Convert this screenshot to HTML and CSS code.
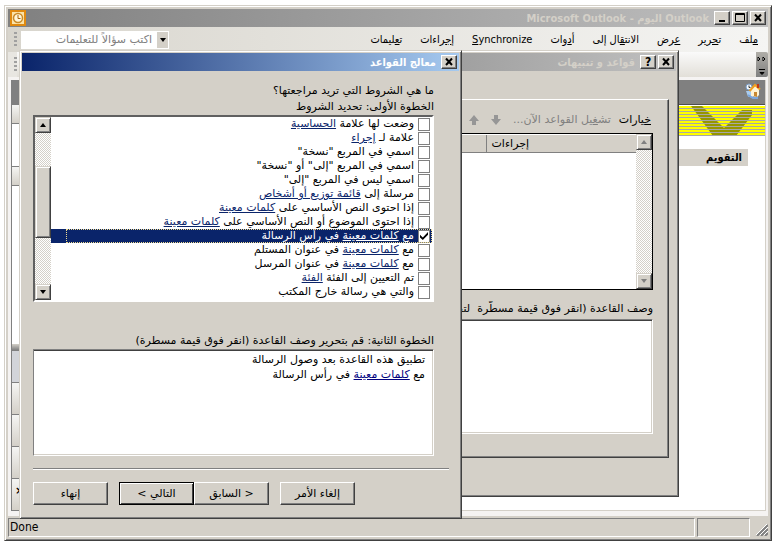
FILE: index.html
```
<!DOCTYPE html>
<html lang="ar">
<head>
<meta charset="utf-8">
<title>Microsoft Outlook</title>
<link rel="stylesheet" href="styles.css">
</head>
<body>
<main class="desktop">
  <section class="window app">
    <header class="titlebar inactive" dir="rtl">
      <button class="cap" aria-label="إغلاق"><svg viewBox="0 0 12 10"><path d="M3 1.5l6 6.500M9 1.500l-6 6.500" stroke="#000" stroke-width="2"/></svg></button>
      <button class="cap" aria-label="تكبير"><svg viewBox="0 0 12 10"><path d="M1.500 0.500h9v8h-9zM2 1.500h8" fill="none" stroke="#000"/></svg></button>
      <button class="cap" aria-label="تصغير"><svg viewBox="0 0 12 10"><path d="M3 8h6" stroke="#000" stroke-width="2"/></svg></button>
      <h1 class="caption"><bdi>Outlook</bdi> اليوم - <bdi>Microsoft Outlook</bdi></h1>
      <svg class="appicon" viewBox="0 0 16 16"><rect x="1" y="1" width="14" height="14" fill="#fbe3a8" stroke="#e08a10" stroke-width="2"/><circle cx="8" cy="8" r="4.500" fill="#fff6d8" stroke="#c98a28" stroke-width="1.500"/><path d="M8 5v3.500h2.500" fill="none" stroke="#a8660c"/></svg>
    </header>
    <nav class="menubar" dir="rtl">
      <a href="#"><u>م</u>لف</a>
      <a href="#">ت<u>ح</u>رير</a>
      <a href="#"><u>ع</u>رض</a>
      <a href="#">الانت<u>ق</u>ال إلى</a>
      <a href="#">أ<u>د</u>وات</a>
      <a href="#"><u>S</u>ynchronize</a>
      <a href="#">إ<u>ج</u>راءات</a>
      <a href="#">ت<u>ع</u>ليمات</a>
      <div class="ask"><button aria-label="فتح القائمة"><i class="tri down"></i></button><input type="text" value="اكتب سؤالاً للتعليمات" aria-label="سؤال"></div>
      <i class="grip"></i>
    </nav>
    <div class="toolbar"><i class="grip"></i><span class="band"></span><button class="more" aria-label="خيارات شريط الأدوات"><svg viewBox="0 0 12 25"><path d="M2 5l2 2-2 2zM7 5l2 2-2 2z" fill="#fff" stroke="#000"/><path d="M3 17.500h6M4 20.500h4l-2 2z" stroke="#000"/></svg></button></div>
    <div class="workspace">
      <aside class="navpane">
        <div class="head"></div><div class="item h19"></div><div class="gap h43"></div><div class="item h19"></div><div class="fill"></div><div class="split"></div><div class="sel"></div><div class="tab"></div><div class="tab"></div><div class="tab"></div><div class="tab last">×</div>
      </aside>
      <div class="today" dir="rtl">
        <div class="home"><svg viewBox="0 0 16 16"><path d="M1 8h7v7l-5-1.500z" fill="#a8ccf0"/><path d="M3 12l5 3h5" fill="none" stroke="#7aa6dc" stroke-width="2"/><circle cx="4" cy="4" r="3" fill="#f4faff" stroke="#7a9cc4"/><path d="M4 2.500v2h1.500" fill="none" stroke="#333"/><path d="M6 7.500v5.500l6 1 2-2V6l-4-4z" fill="#fff4d4"/><path d="M4.500 8L10 2l5 4.500" fill="none" stroke="#f0a020" stroke-width="2"/><path d="M13 1v4" stroke="#c03818" stroke-width="2"/><path d="M9 9h3v5l-3-1z" fill="#c88830"/></svg></div>
        <div class="banner"><svg viewBox="0 0 61 30"><path d="M0 0h11l22 22L51 4h10v5L45 30H22z" fill="#969600"/></svg></div>
        <h2 class="cal">التقويم</h2>
      </div>
    </div>
    <footer class="status"><span class="cell main">Done</span><span class="cell side"></span><svg class="resize" viewBox="0 0 12 12"><path d="M1 12L12 1M5 12l7-7M9 12l3-3" stroke="#808080" stroke-width="2"/><path d="M0 11L11 0M4 11l8-8M8 11l4-4" stroke="#fff"/></svg></footer>
  </section>

  <section class="window rules" dir="rtl">
    <header class="titlebar inactive">
      <button class="cap" aria-label="إغلاق"><svg viewBox="0 0 12 10"><path d="M3 1.500l6 6.500M9 1.500l-6 6.500" stroke="#000" stroke-width="2"/></svg></button>
      <button class="cap" aria-label="تعليمات"><b>?</b></button>
      <h2 class="caption">قواعد و تنبيهات</h2>
    </header>
    <div class="panel">
      <div class="tools">
        <button><u>خ</u>يارات</button>
        <button disabled>تش<u>غ</u>يل القواعد الآن...</button>
        <button disabled aria-label="نقل لأسفل"><svg viewBox="0 0 10 10"><path d="M3 0h4v4h3l-5 6-5-6h3z" fill="#969696"/></svg></button>
        <button disabled aria-label="نقل لأعلى"><svg viewBox="0 0 10 10"><path d="M3 10h4V6h3L5 0 0 6h3z" fill="#969696"/></svg></button>
      </div>
      <div class="grid">
        <div class="bar off"><button aria-label="لأعلى"><i class="tri up"></i></button><span></span><button aria-label="لأسفل"><i class="tri down"></i></button></div>
        <table><thead><tr><th>إجراءات</th><th class="rest"></th></tr></thead></table>
      </div>
      <p class="label">وصف القاعدة (انقر فوق قيمة مسطّرة&nbsp; لتحرير)</p>
      <div class="box"></div>
    </div>
  </section>

  <section class="window wizard" dir="rtl">
    <header class="titlebar">
      <button class="cap" aria-label="إغلاق"><svg viewBox="0 0 12 10"><path d="M3 1.500l6 6.500M9 1.500l-6 6.500" stroke="#000" stroke-width="2"/></svg></button>
      <h2 class="caption">معالج القواعد</h2>
    </header>
    <div class="body">
      <p class="line">ما هي الشروط التي تريد مراجعتها؟</p>
      <p class="line">الخطوة الأولى: تحديد الشروط</p>
      <div class="list">
        <div class="rows">
          <label><input type="checkbox"><span>وضعت لها علامة <a href="#">الحساسية</a></span></label>
          <label><input type="checkbox"><span>علامة لـ <a href="#">إجراء</a></span></label>
          <label><input type="checkbox"><span>اسمي في المربع "نسخة"</span></label>
          <label><input type="checkbox"><span>اسمي في المربع "إلى" أو "نسخة"</span></label>
          <label><input type="checkbox"><span>اسمي ليس في المربع "إلى"</span></label>
          <label><input type="checkbox"><span>مرسلة إلى <a href="#">قائمة توزيع أو أشخاص</a></span></label>
          <label><input type="checkbox"><span>إذا احتوى النص الأساسي على <a href="#">كلمات معينة</a></span></label>
          <label><input type="checkbox"><span>إذا احتوى الموضوع أو النص الأساسي على <a href="#">كلمات معينة</a></span></label>
          <label class="on"><input type="checkbox" checked><span>مع <a href="#">كلمات معينة</a> في رأس الرسالة</span></label>
          <label><input type="checkbox"><span>مع <a href="#">كلمات معينة</a> في عنوان المستلم</span></label>
          <label><input type="checkbox"><span>مع <a href="#">كلمات معينة</a> في عنوان المرسل</span></label>
          <label><input type="checkbox"><span>تم التعيين إلى الفئة <a href="#">الفئة</a></span></label>
          <label><input type="checkbox"><span>والتي هي رسالة خارج المكتب</span></label>
        </div>
        <div class="bar"><button aria-label="لأعلى"><i class="tri up"></i></button><span class="before"></span><span class="thumb"></span><span></span><button aria-label="لأسفل"><i class="tri down"></i></button></div>
      </div>
      <p class="line second">الخطوة الثانية: قم بتحرير وصف القاعدة (انقر فوق قيمة مسطرة)</p>
      <div class="box desc">
        <p>تطبيق هذه القاعدة بعد وصول الرسالة</p>
        <p>مع <a href="#">كلمات معينة</a> في رأس الرسالة</p>
      </div>
      <hr>
      <div class="buttons">
        <button>إلغاء الأمر</button>
        <button class="gapped">&lt; السابق</button>
        <button class="default">التالي &gt;</button>
        <button class="gapped">إنهاء</button>
      </div>
    </div>
  </section>
</main>
</body>
</html>
```
FILE: styles.css
```
:root {
  --face: #d4d0c8;
  --shade: #808080;
  --dark: #404040;
  --narrow: "DejaVu Sans Condensed", "DejaVu Sans", sans-serif;
}
* { box-sizing: border-box; }
body {
  margin: 0;
  background: #fff;
  color: #000;
  font: 11px/15px "DejaVu Sans", sans-serif;
}
h1, h2, p { margin: 0; font-size: inherit; font-weight: normal; }
button, input { font: inherit; color: inherit; margin: 0; padding: 0; border: 0; background: none; }
svg { display: block; }
a { color: #0a246a; }

.desktop { position: relative; height: 100vh; min-height: 546px; padding: 5px 4px; overflow: hidden; }

/* Window frames */
.window {
  display: flex;
  flex-direction: column;
  background: var(--face);
  border: 1px solid;
  border-color: var(--face) var(--dark) var(--dark) var(--face);
  box-shadow: inset 1px 1px #fff, inset -1px -1px var(--shade);
}
.app { height: 100%; padding: 3px; }
.rules { position: absolute; left: 240px; right: 97px; top: 50px; bottom: 49px; padding: 2px; }
.wizard { position: absolute; left: 19px; right: 314px; top: 50px; bottom: 27px; padding: 2px; }

.titlebar {
  display: flex;
  align-items: center;
  gap: 2px;
  flex: none;
  height: 18px;
  padding: 0 2px;
  color: #fff;
  font-family: var(--narrow);
  background: linear-gradient(to right, #0a246a, #a6caf0);
}
.titlebar.inactive { color: var(--face); background: linear-gradient(to right, #808080, #c0c0c0); }
.caption { flex: 1; padding: 0 3px; font-weight: bold; white-space: nowrap; }
.cap {
  display: grid;
  place-items: center;
  width: 16px;
  height: 14px;
  color: #000;
  background: var(--face);
  border: 1px solid;
  border-color: #fff var(--dark) var(--dark) #fff;
  box-shadow: inset -1px -1px var(--shade);
}
.cap svg { width: 12px; height: 10px; }
.cap b { font-size: 12px; line-height: 12px; }
.appicon { width: 16px; height: 16px; }

/* Menu and toolbars */
.menubar {
  display: flex;
  align-items: center;
  gap: 18px;
  flex: none;
  height: 25px;
  padding: 0 10px 0 6px;
  font-family: var(--narrow);
  background: linear-gradient(to right, #d8d5cd, #f5f5f3);
}
.menubar a { color: #000; text-decoration: none; white-space: nowrap; }
.ask { display: flex; width: 148px; height: 18px; margin-right: auto; padding: 1px; background: #fff; font-family: "DejaVu Sans", sans-serif; }
.ask button { width: 11px; background: var(--face); display: grid; place-items: center; }
.ask input { flex: 1; min-width: 0; padding: 0 5px; color: var(--shade); }
.menubar .grip { margin-right: -14px; }
.grip { width: 3px; height: 15px; background: repeating-linear-gradient(#a0a0a0 0 2px, transparent 2px 4px); }
.tri { width: 0; height: 0; border: 3px solid transparent; }
.tri.down { border-top: 4px solid #000; border-bottom: 0; }
.tri.up { border-bottom: 4px solid #000; border-top: 0; }

.toolbar { display: flex; align-items: center; flex: none; height: 25px; padding-left: 6px; background: linear-gradient(to right, #e8e6e1, #f5f5f3); }
.band { flex: 1; height: 100%; background: linear-gradient(#fafafa, #e2dfd8); }
.more { width: 12px; height: 25px; background: linear-gradient(#b0aea8, #808080); border-radius: 0 2px 2px 0; }
.more svg { width: 12px; height: 25px; }

/* Main area */
.workspace { display: flex; flex: 1; min-height: 0; padding: 3px 2px 5px 3px; background: #f5f3f2; }
.navpane { display: flex; flex-direction: column; width: 60px; border-left: 1px solid var(--shade); background: #fff; }
.navpane > * { flex: none; border-bottom: 1px solid var(--shade); }
.head { height: 25px; background: var(--shade); }
.item, .tab { background: linear-gradient(#f5f5f3, #d4d0c8); }
.h19 { height: 19px; }
.h43 { height: 43px; }
.navpane .fill { flex: 1; border: 0; }
.split { height: 7px; background: linear-gradient(#d4d0c8, #808080); }
.sel { height: 32px; background: #d2d4d9; }
.tab { height: 32px; }
.last { padding: 4px 3px; font-weight: bold; }
.today { flex: 1; background: #fff; border: solid var(--face); border-width: 0 1px 1px 0; }
.home { height: 25px; padding: 3px 4px; background: var(--shade); border-bottom: 1px solid #505050; }
.home svg { width: 16px; height: 16px; }
.banner {
  position: relative;
  height: 30px;
  padding-right: 13px;
  margin-top: 1px;
  background: repeating-conic-gradient(#ffff00 0 50%, #e0e0a0 0 75%, #ffff00 0 100%) 0 0 / 4px 3px;
}
.banner svg { width: 61px; height: 30px; }
.banner::after { content: ""; position: absolute; inset: 0; background: repeating-linear-gradient(transparent 0 2px, #a8a8a8 2px 3px); }
.cal { width: 300px; height: 17px; margin: 13px 17px 0; padding: 1px 6px; font-family: var(--narrow); font-weight: bold; background: var(--face); }

.status { display: flex; gap: 2px; flex: none; height: 21px; padding-top: 2px; }
.cell { border: 1px solid; border-color: var(--shade) #fff #fff var(--shade); padding: 1px; font-family: var(--narrow); font-size: 12px; }
.main { flex: 1; }
.side { width: 53px; }
.resize { width: 12px; height: 12px; margin: 6px 0 0 4px; }

/* Rules dialog */
.panel {
  display: flex;
  flex-direction: column;
  flex: 1;
  margin: 28px 7px 36px;
  padding: 10px 15px 23px;
  border: 1px solid;
  border-color: #fff var(--dark) var(--dark) #fff;
  box-shadow: inset -1px -1px var(--shade);
}
.tools { display: flex; align-items: center; gap: 8px; height: 19px; margin-bottom: 4px; padding: 0 2px; }
.tools button { white-space: nowrap; }
.tools button:disabled { color: var(--shade); }
.tools svg { width: 10px; height: 10px; margin-right: 4px; }
.grid { display: flex; height: 157px; background: #fff; border: 1px solid #000; }
.grid table { flex: 1; align-self: flex-start; border-collapse: collapse; }
.grid th { width: 150px; height: 18px; padding: 0 5px; text-align: left; font-weight: normal; background: var(--face); border-bottom: 1px solid var(--shade); border-top: 1px solid #fff; }
.grid th.rest { width: auto; padding: 0; border-right: 1px solid var(--shade); }
.label { margin: 11px 0 3px; white-space: nowrap; overflow: hidden; }
.box { flex: 1; background: #fff; border: 1px solid; border-color: var(--shade) #fff #fff var(--shade); box-shadow: inset 0 1px var(--dark), inset -1px -1px var(--face); }

/* Scroll bars */
.bar { display: flex; flex-direction: column; width: 16px; background: repeating-conic-gradient(#fff 0 25%, #d4d0c8 0 50%) 0 0 / 2px 2px; }
.bar button, .thumb {
  display: grid;
  place-items: center;
  flex: none;
  height: 16px;
  background: var(--face);
  border: 1px solid;
  border-color: var(--face) var(--dark) var(--dark) var(--face);
  box-shadow: inset 1px 1px #fff, inset -1px -1px var(--shade);
}
.bar span { flex: 1; }
.bar .before { flex: none; height: 33px; }
.bar .thumb { flex: none; height: 72px; }
.off .tri.up { border-bottom-color: var(--shade); }
.off .tri.down { border-top-color: var(--shade); }

/* Wizard */
.body { display: flex; flex-direction: column; flex: 1; padding: 12px 25px 11px 11px; }
.line { height: 16px; white-space: nowrap; }
.list { display: flex; border: 2px solid; border-color: #606060 #fff #fff #606060; background: #fff; }
.rows { flex: 1; padding-bottom: 1px; overflow: hidden; }
.rows label { position: relative; display: flex; align-items: center; gap: 4px; height: 14px; padding-right: 2px; line-height: 14px; white-space: nowrap; }
.rows input { appearance: none; display: grid; place-items: center; width: 12px; height: 13px; flex: none; background: #fff; border: 1px solid var(--shade); }
.rows input:checked::after {
  content: "";
  width: 8px;
  height: 8px;
  background: #000;
  clip-path: polygon(0 35%, 35% 68%, 100% 0, 100% 35%, 35% 100%, 0 68%);
}
.rows .on { color: #fff; background: #0a246a; }
.rows .on a { color: #fff; }
.rows .on::after { content: ""; position: absolute; inset: 0 0 0 15px; border: 1px dotted #f0dc90; }
.second { margin-top: 31px; }
.desc { flex: 1; padding: 2px 8px; }
.desc a { color: #000080; }
hr { height: 2px; margin: 12px -15px 12px 0; border: solid; border-width: 1px 0; border-color: var(--shade) transparent #fff; }
.buttons { display: flex; padding-right: 79px; }
.buttons button { width: 75px; height: 23px; background: var(--face); border: 1px solid; border-color: #fff var(--dark) var(--dark) #fff; box-shadow: inset -1px -1px var(--shade); }
.buttons .gapped { margin-right: 11px; }
.buttons .default { border-color: #000; box-shadow: inset 1px 1px #fff, inset -1px -1px var(--dark); }
```
